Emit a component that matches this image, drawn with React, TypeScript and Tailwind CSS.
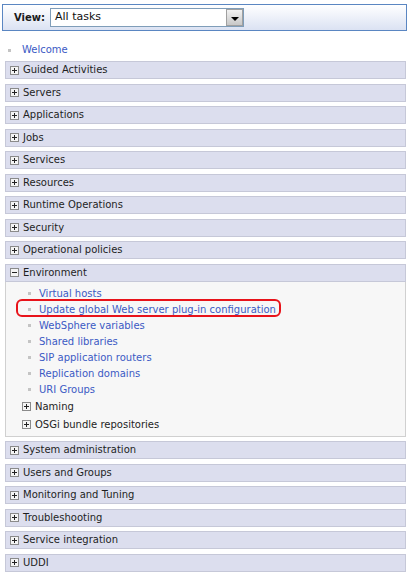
import React from "react";

const Plus = ({ minus = false }: { minus?: boolean }) => (
  <span className="inline-flex w-[9px] h-[9px] border border-[#8a8a8a] bg-[#f4f4f4] items-center justify-center shrink-0 relative">
    <span className="absolute left-[1px] top-[3px] w-[5px] h-[1px] bg-[#222]" />
    {!minus && <span className="absolute left-[3px] top-[1px] w-[1px] h-[5px] bg-[#222]" />}
  </span>
);

const Header = ({ label, minus = false }: { label: string; minus?: boolean }) => (
  <div className="h-[18px] mx-[5px] w-[401px] bg-[#dcdeee] border border-[#c6c8d8] flex items-center pl-[4px] gap-[4px] text-[#1e1e1e]">
    <Plus minus={minus} />
    <span className="leading-none">{label}</span>
  </div>
);

const Bullet = () => <span className="w-[3px] h-[3px] bg-[#c4c4c4] shrink-0" />;

const Item = ({ label, circled = false }: { label: string; circled?: boolean }) => (
  <div className="h-[16px] flex items-center relative">
    {circled && (
      <span className="absolute left-[10px] top-[-3px] w-[265px] h-[18px] border-2 border-[#e8131a] rounded-[6px]" />
    )}
    <span className="ml-[22px] flex items-center">
      <Bullet />
    </span>
    <span className="ml-[8px] text-[#3b5ac4] leading-none">{label}</span>
  </div>
);

const top1 = [
  "Guided Activities",
  "Servers",
  "Applications",
  "Jobs",
  "Services",
  "Resources",
  "Runtime Operations",
  "Security",
  "Operational policies",
];

const bottom = [
  "System administration",
  "Users and Groups",
  "Monitoring and Tuning",
  "Troubleshooting",
  "Service integration",
  "UDDI",
];

export default function App() {
  return (
    <div
      className="w-[413px] h-[580px] bg-white text-[10px] overflow-hidden"
      style={{ fontFamily: '"DejaVu Sans", Verdana, sans-serif' }}
    >
      <div className="pt-[4px] px-[2px]">
        <div className="h-[27px] w-[405px] border border-[#5a86c2] bg-gradient-to-b from-white to-[#dbe2f3] flex items-center pl-[11px]">
          <span className="font-bold text-[#1a1a1a] text-[10px]">View:</span>
          <div className="ml-[5px] h-[19px] w-[194px] border border-[#7f9db9] bg-white flex items-center">
            <span className="pl-[4px] flex-1 text-[#111] text-[11px]">All tasks</span>
            <span className="w-[17px] h-[17px] border border-[#a0a0a0] bg-gradient-to-b from-[#f2f2f2] to-[#c8c8c8] flex items-center justify-center">
              <span className="w-0 h-0 border-l-[4px] border-r-[4px] border-t-[4px] border-l-transparent border-r-transparent border-t-black mt-[2px]" />
            </span>
          </div>
        </div>
      </div>

      <div className="mt-[11px] h-[16px] flex items-center pl-[8px]">
        <Bullet />
        <span className="ml-[11px] text-[#3b5ac4] leading-none">Welcome</span>
      </div>

      <div className="mt-[3px] flex flex-col gap-[4.5px]">
        {top1.map((l) => (
          <Header key={l} label={l} />
        ))}
        <div>
          <Header label="Environment" minus />
          <div className="mx-[5px] w-[401px] bg-[#f7f7f7] border border-t-0 border-[#d0d0d0] pt-[4px] pb-[2px]">
            <Item label="Virtual hosts" />
            <Item label="Update global Web server plug-in configuration" circled />
            <Item label="WebSphere variables" />
            <Item label="Shared libraries" />
            <Item label="SIP application routers" />
            <Item label="Replication domains" />
            <Item label="URI Groups" />
            <div className="h-[18px] flex items-center pl-[16px] gap-[4px] text-[#1e1e1e]">
              <Plus />
              <span className="leading-none">Naming</span>
            </div>
            <div className="h-[18px] flex items-center pl-[16px] gap-[4px] text-[#1e1e1e]">
              <Plus />
              <span className="leading-none">OSGi bundle repositories</span>
            </div>
          </div>
        </div>
        {bottom.map((l) => (
          <Header key={l} label={l} />
        ))}
      </div>
    </div>
  );
}
